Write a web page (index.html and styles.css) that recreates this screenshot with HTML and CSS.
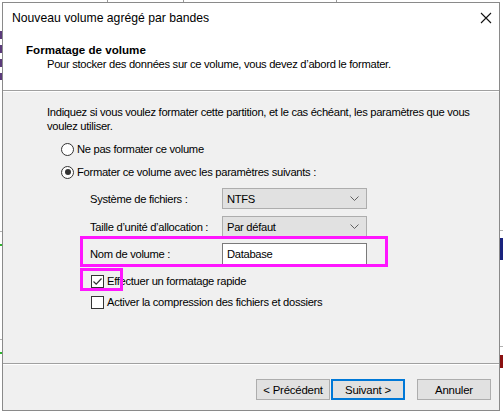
FILE: index.html
```html
<!DOCTYPE html>
<html lang="fr">
<head>
<meta charset="utf-8">
<title>Nouveau volume agrégé par bandes</title>
<link rel="stylesheet" href="styles.css">
</head>
<body>
<div class="screen">
  <div class="desk desk-l1"></div>
  <div class="desk desk-l2"></div>
  <div class="desk desk-lg1"></div>
  <div class="desk desk-lg2"></div>
  <div class="desk desk-lt"></div>
  <div class="desk desk-r1"></div>
  <div class="desk desk-rb1"></div>
  <div class="desk desk-r2"></div>
  <div class="desk desk-rb2"></div>
  <div class="desk desk-t1"></div>
  <div class="desk desk-t2"></div>
  <div class="desk desk-t3"></div>

  <div class="dialog">
    <div class="titlebar">
      <span class="title">Nouveau volume agrégé par bandes</span>
      <svg class="close" width="12" height="12" viewBox="0 0 12 12"><path d="M1 1 L11 11 M11 1 L1 11" stroke="#111" stroke-width="1.1" fill="none"/></svg>
    </div>
    <div class="header">
      <div class="h-title">Formatage de volume</div>
      <div class="h-sub">Pour stocker des données sur ce volume, vous devez d’abord le formater.</div>
    </div>
    <div class="content">
      <p class="intro">Indiquez si vous voulez formater cette partition, et le cas échéant, les paramètres que vous<br>voulez utiliser.</p>
      <div class="radio-row r1"><span class="radio"></span><span>Ne pas formater ce volume</span></div>
      <div class="radio-row r2"><span class="radio checked"></span><span>Formater ce volume avec les paramètres suivants :</span></div>
      <div class="form">
        <div class="field f1"><span class="flabel">Système de fichiers :</span><div class="combo"><span>NTFS</span><svg class="chev" width="9" height="5" viewBox="0 0 9 5"><path d="M0.5 0.5 L4.5 4.5 L8.5 0.5" stroke="#606060" fill="none"/></svg></div></div>
        <div class="field f2"><span class="flabel">Taille d’unité d’allocation :</span><div class="combo"><span>Par défaut</span><svg class="chev" width="9" height="5" viewBox="0 0 9 5"><path d="M0.5 0.5 L4.5 4.5 L8.5 0.5" stroke="#606060" fill="none"/></svg></div></div>
        <div class="field f3"><span class="flabel">Nom de volume :</span><div class="textbox">Database</div></div>
      </div>
      <div class="check-row c1"><span class="checkbox"><svg width="11" height="11" viewBox="0 0 11 11"><path d="M1.5 5.5 L4.2 8.2 L9.5 2.5" stroke="#333" stroke-width="1.2" fill="none"/></svg></span><span>Effectuer un formatage rapide</span></div>
      <div class="check-row c2"><span class="checkbox"></span><span>Activer la compression des fichiers et dossiers</span></div>
      <div class="hl hl-name"></div>
      <div class="hl hl-check"></div>
    </div>
    <div class="footer">
      <button class="btn">&lt; Précédent</button>
      <button class="btn btn-default">Suivant &gt;</button>
      <button class="btn btn-cancel">Annuler</button>
    </div>
  </div>
</div>
</body>
</html>
```
FILE: styles.css
```css
html, body {
  margin: 0;
  padding: 0;
}
body {
  font-family: "Liberation Sans", Arial, sans-serif;
  font-size: 11.2px;
  letter-spacing: -0.3px;
  color: #000;
  background: #fff;
}
.screen {
  position: relative;
  width: 503px;
  height: 412px;
  overflow: hidden;
  background: #fff;
  padding: 2px 0 0 2px;
  box-sizing: border-box;
}
.desk {
  position: absolute;
}
.desk-l1 { left: 0; top: 231px; width: 2px; height: 1px; background: #b0b0b0; }
.desk-l2 { left: 0; top: 339px; width: 2px; height: 1px; background: #b0b0b0; }
.desk-lg1 { left: 0; top: 244px; width: 2px; height: 2px; background: #2fb52f; }
.desk-lg2 { left: 0; top: 352px; width: 2px; height: 2px; background: #2fb52f; }
.desk-lt { left: 0; top: 28px; width: 2px; height: 52px; background: repeating-linear-gradient(#fff 0 3px, #5a3a7a 3px 11px, #fff 11px 14px); }
.desk-r1 { left: 500px; top: 230px; width: 3px; height: 1px; background: #b0b0b0; }
.desk-rb1 { left: 500px; top: 238px; width: 3px; height: 22px; background: #1a237e; }
.desk-r2 { left: 500px; top: 346px; width: 3px; height: 1px; background: #b0b0b0; }
.desk-rb2 { left: 500px; top: 355px; width: 3px; height: 13px; background: #8b1010; }
.desk-t1 { left: 107px; top: 0; width: 1px; height: 2px; background: #999; }
.desk-t2 { left: 183px; top: 0; width: 1px; height: 2px; background: #999; }
.desk-t3 { left: 336px; top: 0; width: 1px; height: 2px; background: #999; }

.dialog {
  position: relative;
  width: 498px;
  height: 409px;
  box-sizing: border-box;
  border: 1px solid #8a8a8a;
  background: #f0f0f0;
  display: flex;
  flex-direction: column;
}
.titlebar {
  height: 30px;
  background: #fff;
  display: flex;
  align-items: center;
  justify-content: space-between;
  padding: 0 7px 0 9px;
  font-size: 12.2px;
  letter-spacing: 0;
}
.title {
  line-height: 30px;
}
.close {
  display: block;
}
.header {
  height: 57px;
  background: #fff;
  border-bottom: 1px solid #a0a0a0;
  box-sizing: content-box;
  padding-left: 23px;
}
.h-title {
  font-weight: bold;
  font-size: 11.6px;
  letter-spacing: 0;
  line-height: 14px;
  padding-top: 10px;
}
.h-sub {
  line-height: 14px;
  padding-left: 21px;
}
.content {
  position: relative;
  height: 272px;
  padding: 14px 0 0 44px;
  box-sizing: border-box;
  box-shadow: inset 0 1px 0 #fff;
}
.intro {
  margin: 0;
  line-height: 14px;
}
.radio-row {
  display: flex;
  align-items: center;
  height: 16px;
  margin-left: 14px;
  gap: 3px;
}
.r1 { margin-top: 8px; }
.r2 { margin-top: 7px; }
.radio {
  width: 11px;
  height: 11px;
  border: 1px solid #333;
  border-radius: 50%;
  background: #fff;
  position: relative;
  flex: none;
}
.radio.checked::after {
  content: "";
  position: absolute;
  left: 2.5px;
  top: 2.5px;
  width: 6px;
  height: 6px;
  border-radius: 50%;
  background: #333;
}
.form {
  margin-left: 43px;
  margin-top: 8px;
}
.field {
  display: flex;
  align-items: center;
}
.flabel {
  width: 132px;
  flex: none;
}
.f1, .f2 { height: 21px; }
.f2 { margin-top: 7px; }
.f3 { height: 22px; margin-top: 6px; }
.combo {
  width: 145px;
  height: 21px;
  box-sizing: border-box;
  border: 1px solid #adadad;
  background: #e1e1e1;
  display: flex;
  align-items: center;
  justify-content: space-between;
  padding: 0 7px 0 4px;
}
.chev { display: block; }
.textbox {
  width: 145px;
  height: 22px;
  box-sizing: border-box;
  border: 1px solid #7a7a7a;
  background: #fff;
  display: flex;
  align-items: center;
  padding-left: 4px;
}
.check-row {
  display: flex;
  align-items: center;
  height: 20px;
  margin-left: 44px;
  gap: 3px;
}
.c1 { margin-top: 6px; }
.c2 { margin-top: 1px; }
.checkbox {
  width: 11px;
  height: 11px;
  border: 1px solid #333;
  background: #fff;
  flex: none;
  display: flex;
  align-items: center;
  justify-content: center;
}
.checkbox svg { display: block; }
.hl {
  position: absolute;
  border: 3px solid #ff16ff;
  box-sizing: border-box;
}
.hl-name { left: 77px; top: 145px; width: 308px; height: 31px; }
.hl-check { left: 77px; top: 177px; width: 43px; height: 23px; }
.footer {
  border-top: 1px solid #a0a0a0;
  box-shadow: inset 0 1px 0 #fff;
  display: flex;
  justify-content: flex-end;
  align-items: flex-start;
  padding: 15px 8px 0 0;
  box-sizing: border-box;
  height: 47px;
}
.btn {
  width: 74px;
  height: 21px;
  box-sizing: border-box;
  border: 1px solid #adadad;
  background: #e1e1e1;
  font-family: inherit;
  font-size: 11.4px;
  letter-spacing: -0.2px;
  color: #000;
  padding: 0;
  margin: 0;
}
.btn-default {
  border: 2px solid #0078d7;
  margin-left: 1px;
}
.btn-cancel {
  margin-left: 12px;
}
```
